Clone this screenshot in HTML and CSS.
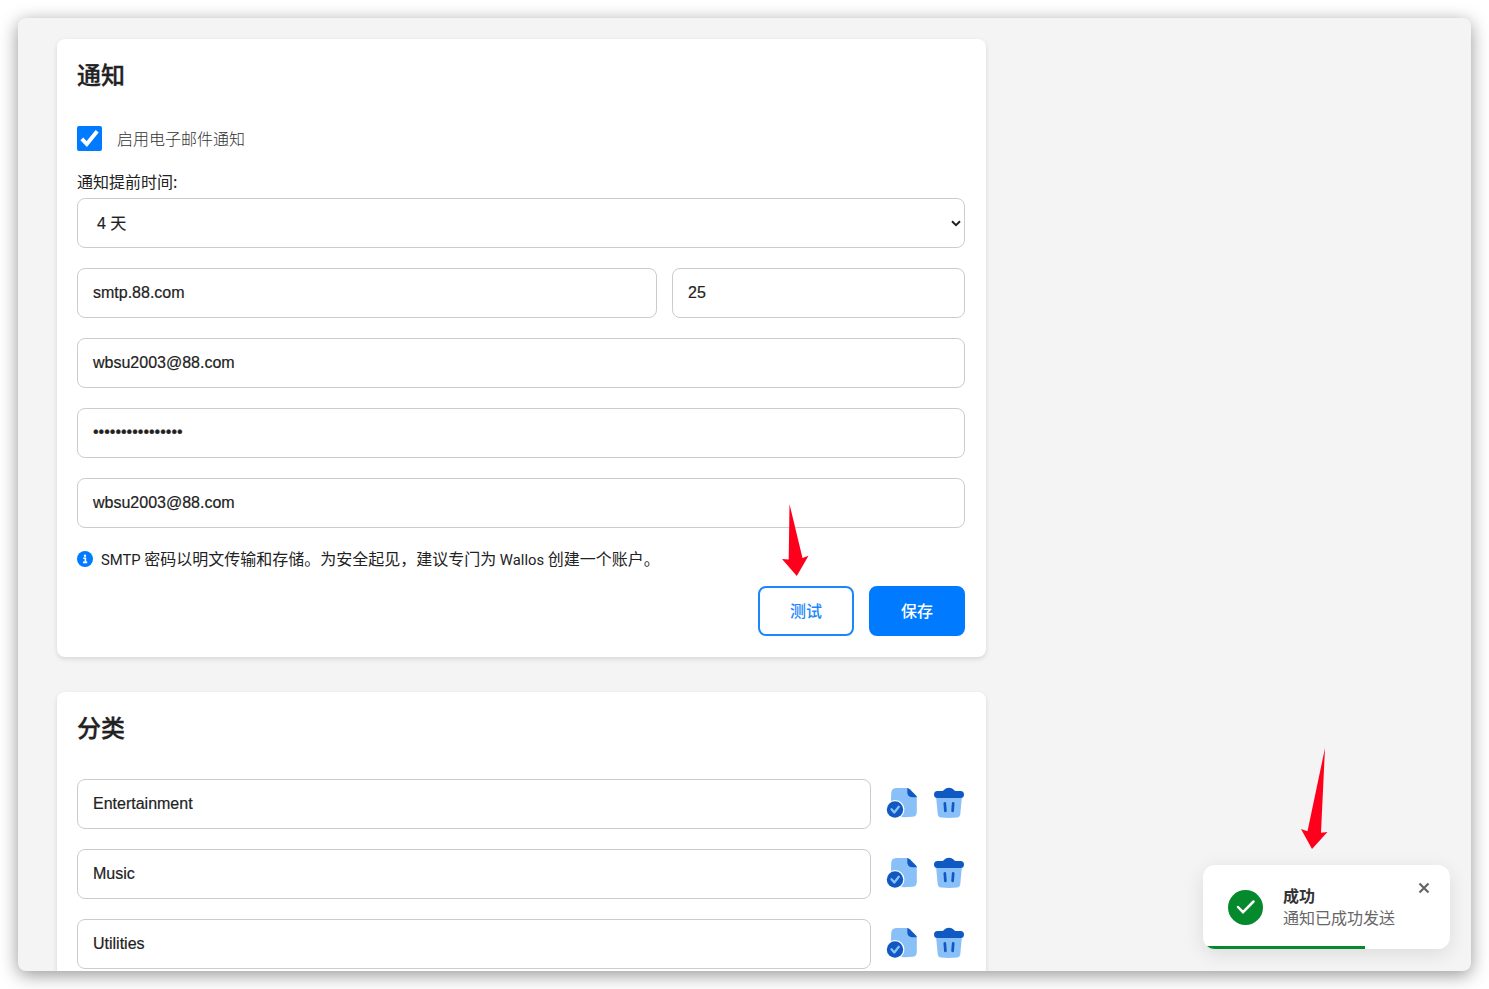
FILE: index.html
```html
<!DOCTYPE html>
<html lang="zh-CN">
<head>
<meta charset="utf-8">
<title>Wallos</title>
<link rel="stylesheet" href="styles.css">
</head>
<body>
<svg class="defs" width="0" height="0">
  <symbol id="save" viewBox="0 0 32 32">
    <path fill="#8ac0f8" d="M10 1h11.500l9.300 9v15.500q-.3 4.200-4.500 4.300-8 .7-16.300 0Q5.500 29.600 5.200 25q-.6-9.500 0-19Q5.500 1.200 10 1z"/>
    <path fill="#1059c3" d="M21.300 1q1.500.2 2.500 1.200l6 6q1 1 1 2.100H26q-4.700-.3-4.700-5z"/>
    <circle cx="9" cy="22.500" r="9.400" fill="#fff"/>
    <circle cx="9" cy="22.500" r="8.200" fill="#1059c3"/>
    <path d="M5.500 22.300l2.800 3.200 4.500-5.700" fill="none" stroke="#8ac0f8" stroke-width="2.300" stroke-linecap="round" stroke-linejoin="round"/>
  </symbol>
  <symbol id="trash" viewBox="0 0 32 32">
    <path fill="#8ac0f8" d="M3 9h26l-1.700 18q-.3 3.200-3.500 3.600-7.800.8-15.600 0-3.200-.4-3.500-3.600z"/>
    <path fill="#1059c3" d="M4.500 3.900h5c2 0 2-3.100 6.500-3.100s4.500 3.100 6.500 3.100h5a3.500 3.500 0 0 1 0 7H4.500a3.500 3.500 0 0 1 0-7z"/>
    <path d="M11.800 16.300l.6 7.500M20.200 16.300l-.6 7.500" fill="none" stroke="#1059c3" stroke-width="2.700" stroke-linecap="round"/>
  </symbol>
</svg>
<main class="window">
  <section class="card notifications">
    <h2>通知</h2>
    <div class="enable">
      <span class="checkbox"><svg width="25" height="25" viewBox="0 0 25 25"><path d="M4.800 12.800l5 5.200L20.200 5.200" fill="none" stroke="#fff" stroke-width="3.900"/></svg></span>
      <span class="enable-text">启用电子邮件通知</span>
    </div>
    <div class="label">通知提前时间:</div>
    <div class="field select"><span>4 天</span><svg width="10" height="7" viewBox="0 0 10 7"><path d="M1 1.200l4 4 4-4" fill="none" stroke="#222" stroke-width="2"/></svg></div>
    <div class="server"><div class="field">smtp.88.com</div><div class="field">25</div></div>
    <div class="field">wbsu2003@88.com</div>
    <div class="field password">••••••••••••••••</div>
    <div class="field">wbsu2003@88.com</div>
    <div class="info">
      <svg width="16" height="16" viewBox="0 0 16 16"><circle cx="8" cy="8" r="8" fill="#007bff"/><circle cx="8" cy="4.700" r="1.200" fill="#fff"/><path d="M6.300 7.300H8.400v4M6 11.400h4.200" fill="none" stroke="#fff" stroke-width="1.600"/></svg>
      <p><span class="latin">SMTP</span> 密码以明文传输和存储。为安全起见，建议专门为 <span class="latin">Wallos</span> 创建一个账户。</p>
    </div>
    <div class="buttons"><button class="secondary">测试</button><button>保存</button></div>
  </section>
  <section class="card categories">
    <h2>分类</h2>
    <div class="row"><div class="field">Entertainment</div><svg class="icon"><use href="#save"/></svg><svg class="icon"><use href="#trash"/></svg></div>
    <div class="row"><div class="field">Music</div><svg class="icon"><use href="#save"/></svg><svg class="icon"><use href="#trash"/></svg></div>
    <div class="row"><div class="field">Utilities</div><svg class="icon"><use href="#save"/></svg><svg class="icon"><use href="#trash"/></svg></div>
  </section>
</main>
<aside class="toast">
  <svg class="ok" width="35" height="35" viewBox="0 0 35 35"><circle cx="17.500" cy="17.500" r="17.500" fill="#048a2c"/><path d="M10 17l5 5.200L25.500 11.500" fill="none" stroke="#fff" stroke-width="2.500" stroke-linecap="round"/></svg>
  <div class="message"><strong>成功</strong><span>通知已成功发送</span></div>
  <svg class="close" width="12" height="12" viewBox="0 0 12 12"><path d="M1.500 1.500l9 9M10.500 1.500l-9 9" stroke="#666" stroke-width="2.200"/></svg>
  <div class="progress"></div>
</aside>
<svg class="arrow arrow-test" width="28" height="73" viewBox="0 0 28 73"><path fill="#ff001c" d="M8.500 0L21.500 54l6-2.200L15.800 72 1 55l6.700.5z"/></svg>
<svg class="arrow arrow-toast" width="28" height="102" viewBox="0 0 28 102"><path fill="#ff001c" d="M25 0L21 84.700l6.500-.7L12 101 1 81l6.500 2.300z"/></svg>
</body>
</html>
```
FILE: styles.css
```css
* { box-sizing: border-box; }
body {
  margin: 0;
  padding: 18px;
  height: 989px;
  overflow: hidden;
  background: #fff;
  color: #222;
  font: 16px/24px "Noto Sans CJK SC", sans-serif;
}
.defs { position: absolute; }
.window {
  height: 953px;
  padding: 21px 39px 0;
  overflow: hidden;
  border-radius: 8px;
  background: #f4f4f4;
  box-shadow: 0 4px 18px rgba(0, 0, 0, .42);
}
.card {
  width: 929px;
  padding: 18px 21px 20px 20px;
  border-radius: 8px;
  background: #fff;
  box-shadow: 0 2px 5px rgba(0, 0, 0, .12);
}
.notifications { height: 618px; margin-bottom: 35px; }
.categories { height: 320px; }
h2 { margin: 0; height: 69px; font-size: 24px; line-height: 33px; font-weight: 500; -webkit-text-stroke: .3px #222; }
.enable { display: flex; align-items: center; gap: 15px; height: 25px; color: #333; font-weight: 300; }
.enable-text { padding-bottom: 2px; }
.checkbox { width: 25px; height: 25px; border-radius: 2px; background: #007bff; }
.checkbox svg { display: block; }
.label { margin: 18px 0 5px; }
.field {
  display: flex;
  align-items: center;
  height: 50px;
  margin-bottom: 20px;
  padding: 0 15px;
  border: 1px solid #ccc;
  border-radius: 8px;
  background: #fff;
  font-family: "Liberation Sans", "Noto Sans CJK SC", sans-serif;
  -webkit-text-stroke: .2px #222;
}
.select { justify-content: space-between; padding: 1px 3px 0 19px; }
.password { padding-bottom: 2px; }
.server { display: grid; grid-template-columns: 580px 293px; gap: 15px; }
.info { display: flex; align-items: center; gap: 8px; height: 24px; margin-top: -1px; }
.info p { margin: 0; white-space: nowrap; }
.latin { font-family: Roboto, sans-serif; font-size: 14.8px; }
.buttons { display: flex; justify-content: flex-end; gap: 15px; margin-top: 15px; }
button {
  width: 96px;
  height: 50px;
  padding: 0 0 2px;
  border: 2px solid #007bff;
  border-radius: 8px;
  background: #007bff;
  color: #fff;
  font: 500 16px "Noto Sans CJK SC", sans-serif;
}
.secondary { background: #fff; border-color: #1c87fb; color: #1c87fb; }
.row { display: flex; gap: 15px; }
.row .field { flex: 1; }
.icon { width: 32px; height: 32px; margin-top: 8px; }
.toast {
  position: absolute;
  left: 1203px;
  top: 865px;
  width: 247px;
  height: 84px;
  padding: 19px 20px 0 25px;
  display: flex;
  gap: 20px;
  overflow: hidden;
  border-radius: 12px;
  background: #fff;
  box-shadow: 0 5px 20px rgba(0, 0, 0, .1);
}
.ok { margin-top: 6px; }
.message { display: flex; flex-direction: column; line-height: 22px; color: #666; white-space: nowrap; }
.message strong { color: #333; font-weight: 600; }
.close { position: absolute; right: 20px; top: 17px; }
.progress { position: absolute; left: 0; bottom: 0; width: 162px; height: 3px; background: #048a2c; }
.arrow { position: absolute; }
.arrow-test { left: 781px; top: 504px; }
.arrow-toast { left: 1300px; top: 748px; }
```
